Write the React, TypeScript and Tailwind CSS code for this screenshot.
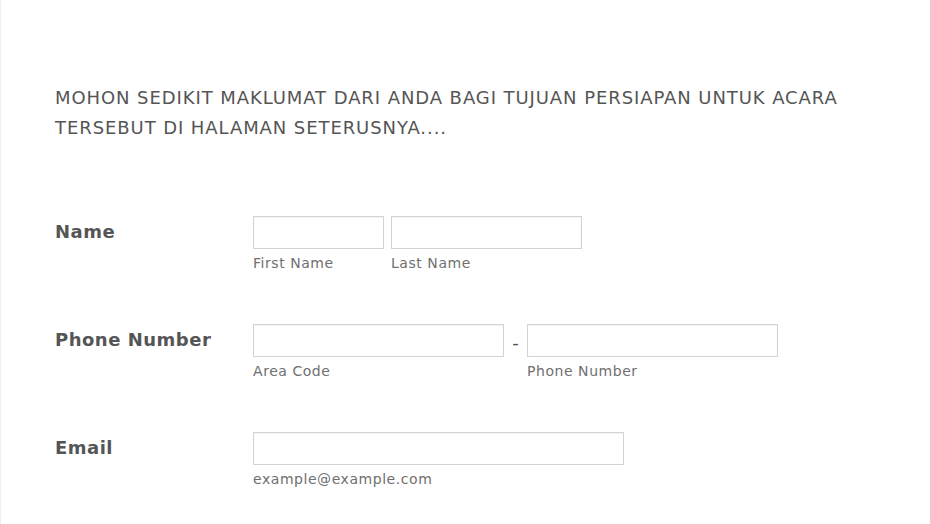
import React from "react";

const font = { fontFamily: '"DejaVu Sans", Verdana, sans-serif' };

function Field({ w, sub }: { w: string; sub: string }) {
  return (
    <div className="flex flex-col">
      <div className={`${w} h-[33px] border border-[#d3d3d3] bg-white shadow-[inset_0_1px_1px_rgba(0,0,0,0.05)]`} />
      <div className="mt-[5px] text-[14px] leading-[18px] tracking-[0.55px] text-[#6f6f6f]">{sub}</div>
    </div>
  );
}

function Row({ label, children }: { label: string; children: React.ReactNode }) {
  return (
    <div className="flex h-[108px]">
      <div className="w-[198px] pt-[4px] text-[18px] font-bold leading-[24px] tracking-[0.5px] text-[#555]">{label}</div>
      <div className="flex items-start">{children}</div>
    </div>
  );
}

export default function App() {
  return (
    <div className="h-[524px] w-[930px] overflow-hidden bg-white" style={font}>
      <div className="h-full border-l border-[#efefef] pl-[54px] pt-[83px]">
        <div className="w-[820px] text-[18px] leading-[30px] tracking-[0.92px] text-[#555]">
          MOHON SEDIKIT MAKLUMAT DARI ANDA BAGI TUJUAN PERSIAPAN UNTUK ACARA TERSEBUT DI HALAMAN SETERUSNYA....
        </div>
        <div className="mt-[73px]">
          <Row label="Name">
            <Field w="w-[131px]" sub="First Name" />
            <div className="w-[7px]" />
            <Field w="w-[191px]" sub="Last Name" />
          </Row>
          <Row label="Phone Number">
            <Field w="w-[251px]" sub="Area Code" />
            <div className="w-[23px] pt-[4px] text-center text-[18px] leading-[30px] text-[#555]">-</div>
            <Field w="w-[251px]" sub="Phone Number" />
          </Row>
          <Row label="Email">
            <Field w="w-[371px]" sub="example@example.com" />
          </Row>
        </div>
      </div>
    </div>
  );
}
